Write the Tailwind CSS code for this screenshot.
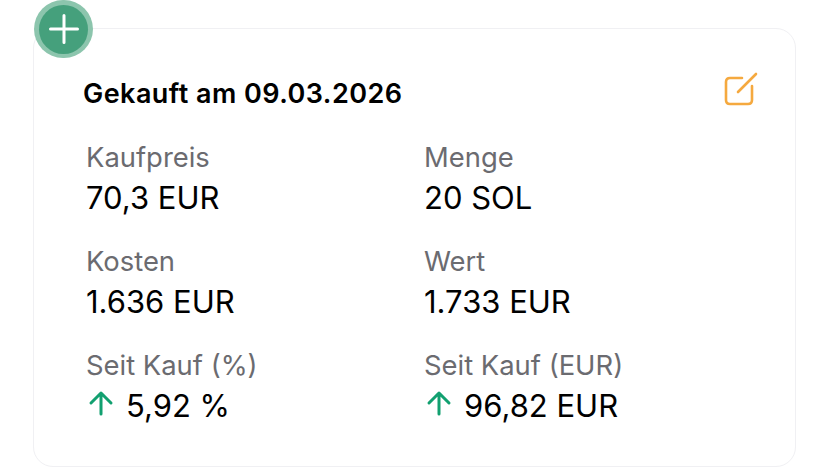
<!DOCTYPE html>
<html lang="en">
<head>
    <meta charset="UTF-8">
    <title>Kauf</title>
    <script src="https://cdn.jsdelivr.net/npm/@tailwindcss/browser@4"></script>
</head>
<body class="bg-white w-[828px] h-[474px] overflow-hidden font-['Inter',sans-serif]">
    <div class="relative pt-[28px] pl-[33px]">
        <!-- add button sits over the card corner -->
        <div class="absolute left-[34px] top-0 w-[59px] h-[58px] rounded-full bg-[#8cc5ad] flex items-center justify-center">
            <div class="w-[49px] h-[49px] rounded-full bg-[#45a07c] flex items-center justify-center">
                <svg width="30" height="30" viewBox="0 0 30 30" fill="none" stroke="#ffffff" stroke-width="3" stroke-linecap="round">
                    <path d="M15 1.5V28.5M1.5 15H28.5"/>
                </svg>
            </div>
        </div>

        <div class="w-[763px] h-[439px] border border-[#f0f0f3] rounded-[20px] pl-[49px] pr-[36px] pt-[47px]">
            <div class="flex items-center justify-between h-[36px]">
                <h2 class="text-[27px] leading-[36px] font-semibold text-black tracking-[0.45px]">Gekauft am 09.03.2026</h2>
                <svg class="-mt-[8px]" width="36" height="36" viewBox="0 0 36 36" fill="none" stroke="#f5a93f" stroke-width="2.6" stroke-linecap="round" stroke-linejoin="round">
                    <path d="M19 6H7Q3 6 3 10V28Q3 32 7 32H25Q29 32 29 28V14"/>
                    <path d="M15 20L33 2"/>
                </svg>
            </div>

            <div class="grid grid-cols-[338px_1fr] pl-[3px] mt-[27px]">
                <div class="h-[104px]">
                    <div class="text-[27.4px] leading-[36px] text-[#6b6b70]">Kaufpreis</div>
                    <div class="text-[31px] leading-[46px] text-black">70,3 EUR</div>
                </div>
                <div class="h-[104px]">
                    <div class="text-[27.4px] leading-[36px] text-[#6b6b70]">Menge</div>
                    <div class="text-[31px] leading-[46px] text-black">20 SOL</div>
                </div>
                <div class="h-[104px]">
                    <div class="text-[27.4px] leading-[36px] text-[#6b6b70]">Kosten</div>
                    <div class="text-[31px] leading-[46px] text-black">1.636 EUR</div>
                </div>
                <div class="h-[104px]">
                    <div class="text-[27.4px] leading-[36px] text-[#6b6b70]">Wert</div>
                    <div class="text-[31px] leading-[46px] text-black">1.733 EUR</div>
                </div>
                <div class="h-[104px]">
                    <div class="text-[27.4px] leading-[36px] text-[#6b6b70]">Seit Kauf (%)</div>
                    <div class="flex items-center gap-[12px] text-[31px] leading-[46px] text-black">
                        <svg class="-mt-[6px] ml-[2px]" width="26" height="26" viewBox="0 0 26 26" fill="none" stroke="#12a070" stroke-width="3" stroke-linecap="round" stroke-linejoin="round">
                            <path d="M13 24V3M3 13L13 3L23 13"/>
                        </svg>
                        <span>5,92 %</span>
                    </div>
                </div>
                <div class="h-[104px]">
                    <div class="text-[27.4px] leading-[36px] text-[#6b6b70]">Seit Kauf (EUR)</div>
                    <div class="flex items-center gap-[12px] text-[31px] leading-[46px] text-black">
                        <svg class="-mt-[6px] ml-[2px]" width="26" height="26" viewBox="0 0 26 26" fill="none" stroke="#12a070" stroke-width="3" stroke-linecap="round" stroke-linejoin="round">
                            <path d="M13 24V3M3 13L13 3L23 13"/>
                        </svg>
                        <span>96,82 EUR</span>
                    </div>
                </div>
            </div>
        </div>
    </div>
</body>
</html>
